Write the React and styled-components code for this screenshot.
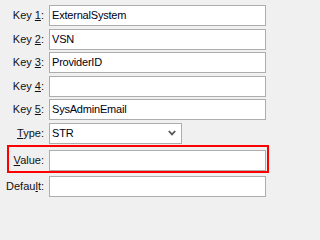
import React from 'react';
import styled, { createGlobalStyle } from 'styled-components';

const GlobalStyle = createGlobalStyle`
  html, body {
    margin: 0;
    padding: 0;
    background: #f0f0f0;
  }
`;

const Form = styled.div`
  display: flex;
  flex-direction: column;
  width: 271px;
  height: 202px;
  box-sizing: border-box;
  padding: 5px 5px 0 0;
  background: #f0f0f0;
  font-family: "Liberation Sans", Arial, sans-serif;
  font-size: 11px;
  color: #000;
`;

const Row = styled.div`
  display: grid;
  grid-template-columns: ${(p) => (p.$highlight ? '35px' : '44px')} 217px;
  column-gap: 5px;
  align-items: center;
  margin-top: ${(p) => p.$gap}px;
  ${(p) =>
    p.$highlight &&
    `
    margin-left: 7px;
    margin-right: -3px;
    border: 2px solid #ff0000;
    padding: 3px 1px 0 0;
  `}
`;

const Label = styled.label`
  text-align: right;
  white-space: nowrap;
  line-height: 21px;
  color: #101010;

  u {
    text-decoration: underline;
    text-underline-offset: 1px;
  }
`;

const Field = styled.div`
  box-sizing: border-box;
  height: 21px;
  border: 1px solid #adadad;
  background: #fff;
  padding: 0 2px;
  line-height: 19px;
  letter-spacing: -0.2px;
  color: #000014;
  white-space: nowrap;
  overflow: hidden;
`;

const Select = styled.div`
  box-sizing: border-box;
  width: 133px;
  height: 21px;
  border: 1px solid #adadad;
  background: #fff;
  padding: 0 5px 0 2px;
  display: flex;
  align-items: center;
  justify-content: space-between;
  letter-spacing: -0.2px;
  color: #000014;
`;

const Chevron = () => (
  <svg width="8" height="6" viewBox="0 0 8 6">
    <polyline points="0.8,1 4,4.4 7.2,1" fill="none" stroke="#555" strokeWidth="1.8" />
  </svg>
);

const keys = [
  { n: '1', value: 'ExternalSystem' },
  { n: '2', value: 'VSN' },
  { n: '3', value: 'ProviderID' },
  { n: '4', value: '' },
  { n: '5', value: 'SysAdminEmail' },
];

export default function App() {
  return (
    <>
      <GlobalStyle />
      <Form>
        {keys.map((k, i) => (
          <Row key={k.n} $gap={i === 0 ? 0 : 2.5}>
            <Label>
              Key <u>{k.n}</u>:
            </Label>
            <Field>{k.value}</Field>
          </Row>
        ))}
        <Row $gap={2.5}>
          <Label>
            <u>T</u>ype:
          </Label>
          <Select>
            <span>STR</span>
            <Chevron />
          </Select>
        </Row>
        <Row $gap={1.5} $highlight>
          <Label>
            <u>V</u>alue:
          </Label>
          <Field />
        </Row>
        <Row $gap={3}>
          <Label>
            Defau<u>l</u>t:
          </Label>
          <Field />
        </Row>
      </Form>
    </>
  );
}
